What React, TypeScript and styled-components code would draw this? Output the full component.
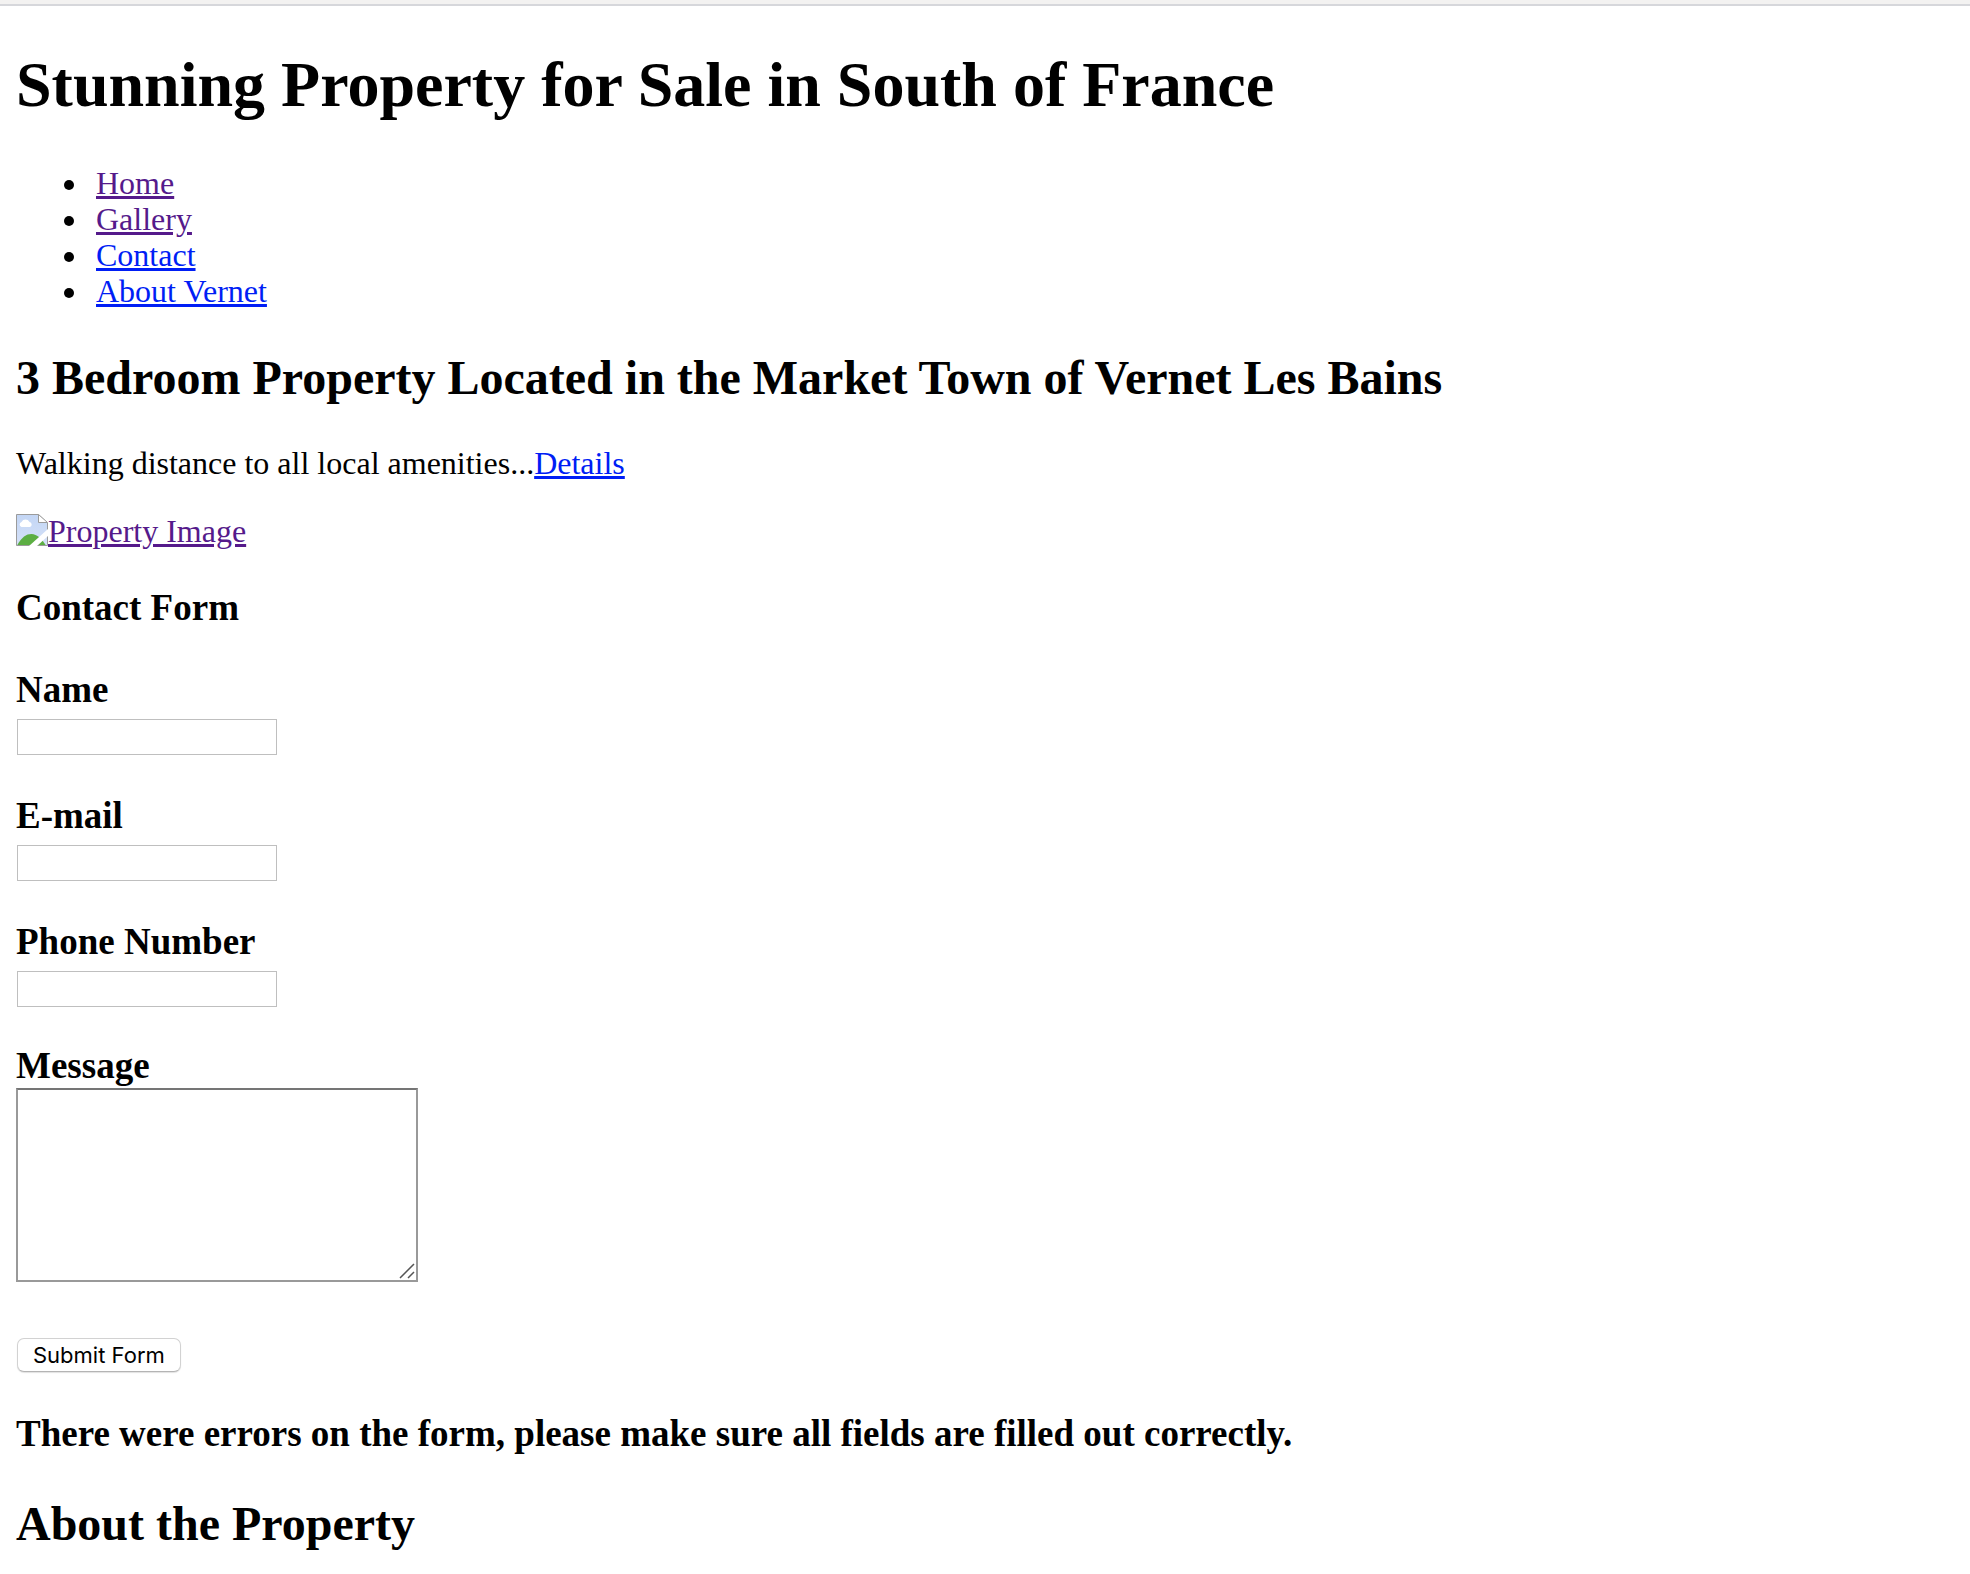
import React from "react";
import styled, { createGlobalStyle } from "styled-components";

const GlobalStyle = createGlobalStyle`
  body {
    margin: 0;
    background: #ffffff;
    color: #000000;
    font-family: "Liberation Serif", "Times New Roman", Times, serif;
    font-size: 32px;
    line-height: 36px;
  }
`;

const TopEdge = styled.div`
  height: 4px;
  background: #f3f2f1;
  border-bottom: 2px solid #d6d7db;
`;

const Page = styled.main`
  padding: 43px 16px 22px;
`;

const Title = styled.h1`
  margin: 0 0 44px;
  font-size: 64px;
  line-height: 72px;
`;

const SectionTitle = styled.h2`
  margin: 40px 0 38px;
  font-size: 48px;
  line-height: 58px;

  &:last-child {
    margin-bottom: 0;
  }
`;

const SubTitle = styled.h3`
  margin: 38px 0 40px;
  font-size: 37px;
  line-height: 42px;
`;

const NavList = styled.ul`
  margin: 0;
  padding: 0 0 0 48px;
  list-style: none;
`;

const NavItem = styled.li`
  display: flex;
  align-items: center;

  &::before {
    content: "";
    width: 10px;
    height: 10px;
    margin: 4px 22px 0 0;
    border-radius: 50%;
    background: #000000;
  }
`;

const Link = styled.a<{ $visited?: boolean }>`
  color: ${(p) => (p.$visited ? "#551a8b" : "#001ef5")};
  text-decoration: underline;
`;

const Paragraph = styled.p`
  margin: 0 0 32px;
`;

const MissingImage = styled.svg`
  width: 32px;
  height: 32px;
  vertical-align: -4px;
`;

const Form = styled.form`
  display: flex;
  flex-direction: column;
  align-items: flex-start;
  gap: 40px;
  margin-bottom: 41px;
`;

const Field = styled.div`
  display: flex;
  flex-direction: column;
  gap: 8px;
`;

const MessageField = styled(Field)`
  gap: 1px;
  margin: -2px 0 16px;
`;

const Label = styled.label`
  font-size: 37px;
  font-weight: bold;
  line-height: 42px;
`;

const TextInput = styled.input`
  box-sizing: border-box;
  width: 260px;
  height: 36px;
  margin: 0 1px;
  padding: 2px 4px;
  border: 1px solid #bfbfbf;
  border-radius: 0;
  background: #ffffff;
  font: 22px Inter, sans-serif;
`;

const MessageBox = styled.div`
  position: relative;
  display: flex;
`;

const MessageInput = styled.textarea`
  box-sizing: border-box;
  width: 402px;
  height: 194px;
  padding: 4px;
  border: 2px solid #999999;
  border-top-color: #757575;
  border-radius: 0;
  background: #ffffff;
  font: 22px "Liberation Mono", monospace;
  resize: none;
`;

const Grip = styled.svg`
  position: absolute;
  right: 3px;
  bottom: 3px;
  width: 16px;
  height: 16px;
  pointer-events: none;
`;

const SubmitButton = styled.button`
  height: 34px;
  margin: 0 1px;
  padding: 0 15px;
  border: 1px solid #d2d2d2;
  border-bottom-color: #b4b4b4;
  border-radius: 7px;
  background: #ffffff;
  box-shadow: 0 1px 1px #e2e2e2;
  color: #000000;
  font: 22px/32px Inter, sans-serif;
`;

const navLinks = [
  { label: "Home", visited: true },
  { label: "Gallery", visited: true },
  { label: "Contact", visited: false },
  { label: "About Vernet", visited: false },
];

const textFields = [
  { id: "name", label: "Name", type: "text" },
  { id: "email", label: "E-mail", type: "email" },
  { id: "phone", label: "Phone Number", type: "tel" },
];

function MissingImageIcon() {
  return (
    <MissingImage viewBox="0 0 32 32" aria-hidden="true">
      <defs>
        <linearGradient id="sky" x1="0" y1="0" x2="0" y2="1">
          <stop offset="0" stopColor="#c3d6f5" />
          <stop offset="1" stopColor="#d5e1f8" />
        </linearGradient>
      </defs>
      <path d="M0.5 0.5H22.5L31.5 9V31.5H0.5Z" fill="url(#sky)" />
      <path d="M5.500 13a2.600 2.600 0 0 1 0 -5a4.500 4.500 0 0 1 8 0a2.600 2.600 0 0 1 0.500 5Z" fill="#ffffff" />
      <path d="M1 31.500C6 23 10 20 15.500 20C21 20 26 25 30 31.500Z" fill="#5cae43" />
      <path d="M0.500 31.500V0.500H22.500L31.500 9V31.500Z" fill="none" stroke="#9b9b9b" />
      <path d="M22.500 0.500V8.500H31.500Z" fill="#ffffff" stroke="#9b9b9b" />
      <path d="M13 32L32 15V22L21 32Z" fill="#ffffff" />
    </MissingImage>
  );
}

export default function App() {
  return (
    <>
      <GlobalStyle />
      <TopEdge />
      <Page>
        <Title>Stunning Property for Sale in South of France</Title>
        <nav>
          <NavList>
            {navLinks.map((link) => (
              <NavItem key={link.label}>
                <Link href="#" $visited={link.visited}>
                  {link.label}
                </Link>
              </NavItem>
            ))}
          </NavList>
        </nav>

        <SectionTitle>3 Bedroom Property Located in the Market Town of Vernet Les Bains</SectionTitle>
        <Paragraph>
          Walking distance to all local amenities...<Link href="#">Details</Link>
        </Paragraph>
        <Paragraph>
          <Link href="#" $visited>
            <MissingImageIcon />
            Property Image
          </Link>
        </Paragraph>

        <SubTitle>Contact Form</SubTitle>
        <Form onSubmit={(event) => event.preventDefault()}>
          {textFields.map((field) => (
            <Field key={field.id}>
              <Label htmlFor={field.id}>{field.label}</Label>
              <TextInput id={field.id} name={field.id} type={field.type} />
            </Field>
          ))}
          <MessageField>
            <Label htmlFor="message">Message</Label>
            <MessageBox>
              <MessageInput id="message" name="message" />
              <Grip viewBox="0 0 16 16" aria-hidden="true">
                <path d="M1 15L15 1M9 15L15 9" fill="none" stroke="#555555" strokeWidth="1.500" />
              </Grip>
            </MessageBox>
          </MessageField>
          <SubmitButton type="submit">Submit Form</SubmitButton>
        </Form>

        <SubTitle>There were errors on the form, please make sure all fields are filled out correctly.</SubTitle>
        <SectionTitle>About the Property</SectionTitle>
      </Page>
    </>
  );
}
